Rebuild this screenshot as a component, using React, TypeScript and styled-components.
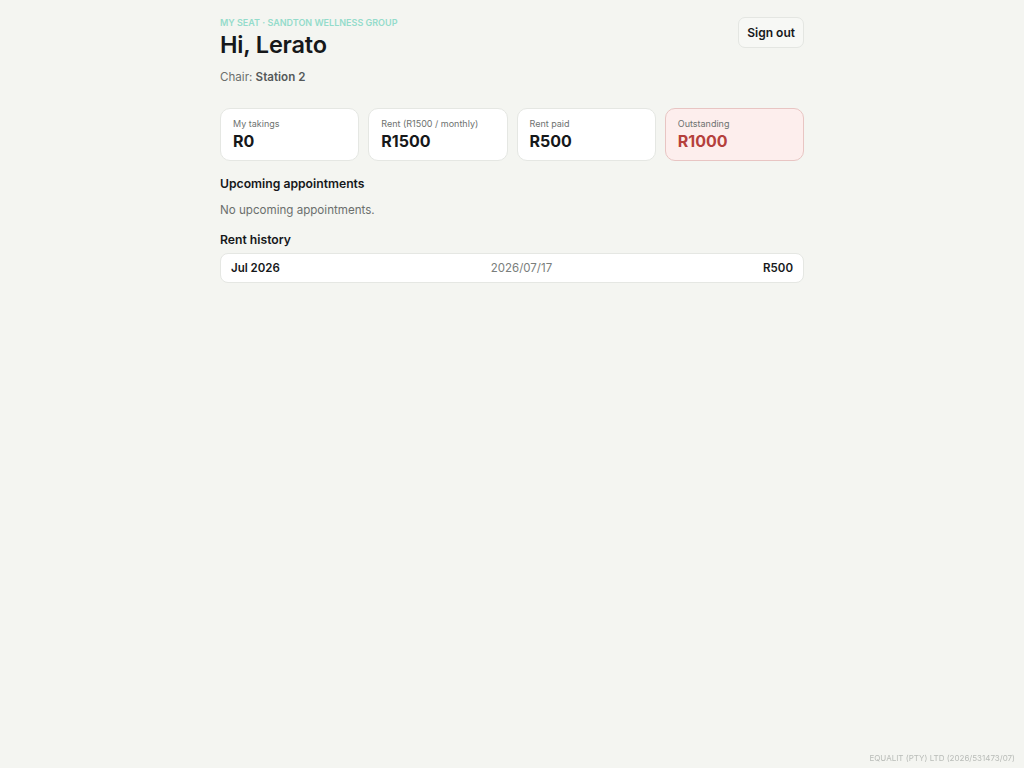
import React from 'react'
import styled, { createGlobalStyle } from 'styled-components'

interface IStat {
    label: string
    value: string
    alert?: boolean
}

interface IRent {
    month: string
    date: string
    amount: string
}

const stats: IStat[] = [
    { label: 'My takings', value: 'R0' },
    { label: 'Rent (R1500 / monthly)', value: 'R1500' },
    { label: 'Rent paid', value: 'R500' },
    { label: 'Outstanding', value: 'R1000', alert: true },
]

const rents: IRent[] = [
    { month: 'Jul 2026', date: '2026/07/17', amount: 'R500' },
]

const GlobalStyle = createGlobalStyle`
    html, body {
        margin: 0;
        padding: 0;
        background: #f4f5f1;
        font-family: Inter, "Noto Sans", sans-serif;
        color: #16181a;
    }
`

const Page = styled.div`
    min-height: 768px;
    box-sizing: border-box;
    padding-top: 17px;
`

const Container = styled.main`
    width: 584px;
    margin: 0 auto;
`

const Header = styled.header`
    display: flex;
    justify-content: space-between;
    align-items: flex-start;
`

const Eyebrow = styled.div`
    font-size: 9px;
    font-weight: 600;
    text-transform: uppercase;
    color: #94dccb;
    line-height: 12px;
`

const Greeting = styled.h1`
    margin: 1px 0 0;
    font-size: 23.5px;
    font-weight: 600;
    line-height: 30px;
    letter-spacing: -0.2px;
`

const Chair = styled.div`
    margin-top: 9px;
    font-size: 11.6px;
    color: #6b6f6d;
    line-height: 16px;

    b {
        font-weight: 600;
        color: #55595a;
    }
`

const SignOut = styled.button`
    height: 31px;
    padding: 0 8px;
    border: 1px solid #e4e6e2;
    border-radius: 7px;
    background: #f7f8f5;
    font-family: inherit;
    font-size: 12px;
    font-weight: 600;
    color: #16181a;
    cursor: pointer;
`

const Stats = styled.section`
    display: grid;
    grid-template-columns: repeat(4, 1fr);
    gap: 9px;
    margin-top: 23px;
`

const StatCard = styled.div<{ $alert?: boolean }>`
    height: 53px;
    box-sizing: border-box;
    padding: 9px 12px 0;
    border-radius: 10px;
    border: 1px solid ${p => (p.$alert ? '#e8c5c3' : '#e5e7e3')};
    background: ${p => (p.$alert ? '#fdeeed' : '#ffffff')};
`

const StatLabel = styled.div`
    font-size: 9px;
    color: #6e7270;
    line-height: 12px;
`

const StatValue = styled.div<{ $alert?: boolean }>`
    margin-top: 1px;
    font-size: 16px;
    font-weight: 700;
    line-height: 20px;
    color: ${p => (p.$alert ? '#b5403c' : '#16181a')};
`

const SectionTitle = styled.h2`
    margin: 15px 0 0;
    font-size: 12.2px;
    font-weight: 600;
    line-height: 16px;

    & + p + & {
        margin-top: 14px;
    }
`

const Empty = styled.p`
    margin: 10px 0 0;
    font-size: 11.6px;
    color: #6b6f6d;
    line-height: 16px;
`

const RentList = styled.div`
    margin-top: 5px;
    display: flex;
    flex-direction: column;
    gap: 6px;
`

const RentRow = styled.div`
    display: flex;
    justify-content: space-between;
    align-items: center;
    height: 30px;
    box-sizing: border-box;
    padding: 0 10px;
    border-radius: 8px;
    border: 1px solid #e5e7e3;
    background: #ffffff;
    font-size: 11.5px;
`

const RentMonth = styled.span`
    font-weight: 600;
`

const RentDate = styled.span`
    color: #7a7e7c;
`

const RentAmount = styled.span`
    font-weight: 600;
`

const Footer = styled.footer`
    position: fixed;
    right: 9px;
    bottom: 5px;
    font-size: 8px;
    color: #b9bcb8;
`

export default function App(): JSX.Element {
    return (
        <Page>
            <GlobalStyle />
            <Container>
                <Header>
                    <div>
                        <Eyebrow>My seat · Sandton Wellness Group</Eyebrow>
                        <Greeting>Hi, Lerato</Greeting>
                        <Chair>Chair: <b>Station 2</b></Chair>
                    </div>
                    <SignOut>Sign out</SignOut>
                </Header>

                <Stats>
                    {stats.map(s => (
                        <StatCard key={s.label} $alert={s.alert}>
                            <StatLabel>{s.label}</StatLabel>
                            <StatValue $alert={s.alert}>{s.value}</StatValue>
                        </StatCard>
                    ))}
                </Stats>

                <SectionTitle>Upcoming appointments</SectionTitle>
                <Empty>No upcoming appointments.</Empty>

                <SectionTitle>Rent history</SectionTitle>
                <RentList>
                    {rents.map(r => (
                        <RentRow key={r.date}>
                            <RentMonth>{r.month}</RentMonth>
                            <RentDate>{r.date}</RentDate>
                            <RentAmount>{r.amount}</RentAmount>
                        </RentRow>
                    ))}
                </RentList>
            </Container>
            <Footer>EQUALIT (PTY) LTD (2026/531473/07)</Footer>
        </Page>
    )
}
